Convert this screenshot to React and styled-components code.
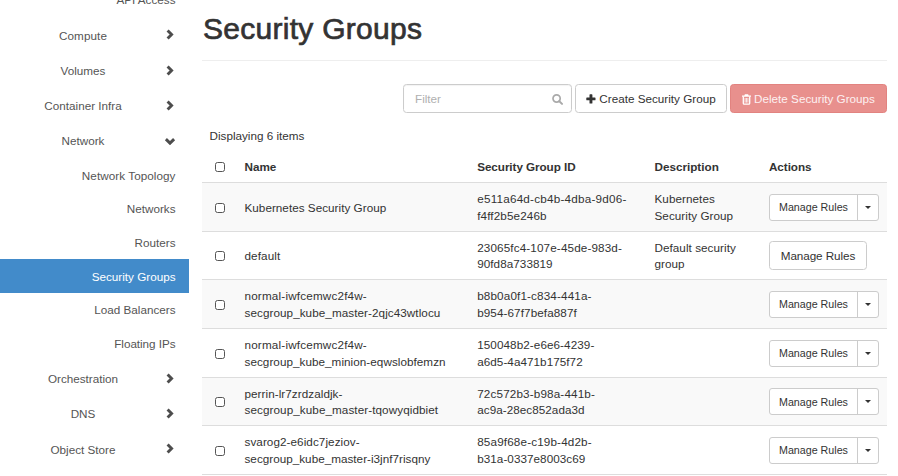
import React from "react";
import styled, { createGlobalStyle } from "styled-components";

const Global = createGlobalStyle`
  * { box-sizing: border-box; }
  body {
    margin: 0;
    background: #fff;
    overflow: hidden;
    font-family: "Liberation Sans", Arial, sans-serif;
    font-size: 11.7px;
    line-height: 16.7px;
    color: #333;
  }
`;

const Page = styled.div`
  display: flex;
  height: 476px;
  overflow: hidden;
`;

const Sidebar = styled.nav`
  width: 189px;
  flex: none;
  display: flex;
  flex-direction: column;
  justify-content: flex-start;
  color: #555;
  margin-top: -17.4px;
`;

const SubItem = styled.a`
  flex: none;
  height: 33.67px;
  padding: 2.6px 13.5px 0 0;
  display: flex;
  align-items: center;
  justify-content: flex-end;
  letter-spacing: ${(p) => p.$track || 0}px;
  color: ${(p) => (p.$active ? "#fff" : "#555")};
  background: ${(p) => (p.$active ? "#428bca" : "transparent")};
`;

const GroupItem = styled.a`
  flex: none;
  height: 35.2px;
  padding-top: 2.4px;
  display: grid;
  grid-template-columns: 166px 7px;
  align-items: center;

  ${SubItem} + & {
    margin-top: 0.9px;
  }
`;

const GroupLabel = styled.span`
  text-align: center;
  letter-spacing: ${(p) => p.$track || 0}px;
`;

const ChevronSvg = styled.svg`
  display: block;
  justify-self: center;
  margin-top: ${(p) => (p.$open ? "-0.5px" : "-2px")};
  transform: ${(p) => (p.$open ? "rotate(90deg)" : "none")};
`;

const Main = styled.main`
  width: 685px;
  margin-left: 13px;
  flex: none;
`;

const Title = styled.h1`
  margin: 0;
  height: 61px;
  padding: 12px 0 0 1px;
  border-bottom: 1px solid #eee;
  font-size: 30px;
  line-height: 34px;
  font-weight: 400;
  letter-spacing: 0.28px;
  -webkit-text-stroke: 0.7px #333;
`;

const Toolbar = styled.div`
  display: flex;
  justify-content: flex-end;
  gap: 3px;
  margin-top: 23px;
`;

const FilterBox = styled.div`
  width: 169px;
  height: 29px;
  padding: 1px 8.5px 0 11px;
  display: flex;
  align-items: center;
  justify-content: space-between;
  border: 1px solid #ccc;
  border-radius: 3.5px;
  box-shadow: inset 0 1px 1px rgba(0, 0, 0, 0.05);
  color: #b0b0b0;
`;

const ToolButton = styled.button`
  width: ${(p) => p.$width}px;
  height: 29px;
  padding: 1px 0 0;
  display: flex;
  align-items: center;
  justify-content: center;
  gap: 3px;
  font: inherit;
  border-radius: 3.5px;
  border: 1px solid ${(p) => (p.$danger ? "#e28380" : "#ccc")};
  background: ${(p) => (p.$danger ? "#e8908d" : "#fff")};
  color: ${(p) => (p.$danger ? "#fdf1f1" : "#333")};
`;

const Count = styled.div`
  height: 38px;
  padding: 15px 0 0 7.5px;
`;

const Row = styled.div`
  display: grid;
  grid-template-columns: 42.5px 232.7px 177.3px 114.5px 1fr;
  align-items: center;
  height: 48.67px;
  border-top: 1px solid #ddd;
  background: ${(p) => (p.$striped ? "#f9f9f9" : "#fff")};
`;

const Foot = styled.div`
  border-top: 1px solid #ddd;
`;

const Cell = styled.div`
  padding-top: ${(p) => (p.$single ? 2.5 : 2)}px;
`;

const Line = styled.div`
  white-space: nowrap;
  letter-spacing: ${(p) => p.$track || 0}px;
`;

const Check = styled.span`
  display: block;
  width: 10px;
  height: 10px;
  margin: 1.8px 0 0 13px;
  border: 1px solid #555;
  border-radius: 2.5px;
  background: #fff;
`;

const HeadRow = styled(Row)`
  height: 31px;
  border-top: 0;
  font-weight: 700;

  ${Line} {
    padding-top: 2px;
  }

  ${Check} {
    margin-top: 1px;
  }
`;

const SplitButton = styled.div`
  display: grid;
  grid-template-columns: 87px 1fr;
  width: 110px;
  height: 27px;
  margin-top: 1px;
  border: 1px solid #ccc;
  border-radius: 3px;
  background: #fff;
  font-size: 10.7px;
`;

const SplitPart = styled.div`
  display: flex;
  align-items: center;
  justify-content: center;
  border-left: ${(p) => (p.$caret ? "1px solid #ccc" : "0")};
`;

const Caret = styled.span`
  border: 3.5px solid transparent;
  border-top-color: #333;
  border-bottom: 0;
`;

const SingleButton = styled.div`
  width: 98px;
  height: 29px;
  margin-top: 1px;
  padding-top: 1px;
  display: flex;
  align-items: center;
  justify-content: center;
  border: 1px solid #ccc;
  border-radius: 3.5px;
  background: #fff;
  letter-spacing: -0.08px;
`;

const Chevron = ({ open }) => (
  <ChevronSvg $open={open} width="8" height="11" viewBox="0 0 8 11">
    <path d="M1.6 1.4 5.6 5.5 1.6 9.6" fill="none" stroke="#4d4d4d" strokeWidth="2.9" />
  </ChevronSvg>
);

const SearchIcon = () => (
  <svg width="11" height="11" viewBox="0 0 11 11" fill="none" stroke="#aaa">
    <circle cx="4.6" cy="4.5" r="3.6" strokeWidth="1.7" />
    <path d="M7.3 7.2 10 9.9" strokeWidth="2" strokeLinecap="round" />
  </svg>
);

const PlusIcon = () => (
  <svg width="10" height="10" viewBox="0 0 10 10" fill="#333">
    <rect x="0.3" y="3.4" width="9.2" height="2.9" rx="0.6" />
    <rect x="3.5" y="0.3" width="2.9" height="9.2" rx="0.6" />
  </svg>
);

const TrashIcon = () => (
  <svg width="9" height="11" viewBox="0 0 9 11" fill="none" stroke="#fff">
    <path d="M0 2.2h9M2.8 2 3.3.8h2.4l.5 1.2" strokeWidth="1.2" />
    <path d="M1.3 2.6v6.6q0 .9.8.9h4.8q.8 0 .8-.9V2.6" strokeWidth="1.3" />
    <path d="M3.1 4v4.6M4.5 4v4.6M5.9 4v4.6" strokeWidth=".8" />
  </svg>
);

const nav = [
  { sub: "API Access" },
  { group: "Compute", track: 0.1 },
  { group: "Volumes" },
  { group: "Container Infra" },
  { group: "Network", open: true },
  { sub: "Network Topology", track: 0.06 },
  { sub: "Networks" },
  { sub: "Routers" },
  { sub: "Security Groups", active: true },
  { sub: "Load Balancers" },
  { sub: "Floating IPs", track: -0.04 },
  { group: "Orchestration" },
  { group: "DNS" },
  { group: "Object Store" },
];

const rows = [
  {
    name: [["Kubernetes Security Group", 0.03]],
    id: [["e511a64d-cb4b-4dba-9d06-", 0.22], ["f4ff2b5e246b", 0.12]],
    description: [["Kubernetes", 0.06], ["Security Group", 0.05]],
    menu: true,
  },
  {
    name: [["default", 0.1]],
    id: [["23065fc4-107e-45de-983d-", 0.13], ["90fd8a733819", 0.06]],
    description: [["Default security", 0.05], ["group", 0.05]],
  },
  {
    name: [["normal-iwfcemwc2f4w-", 0.18], ["secgroup_kube_master-2qjc43wtlocu", 0.07]],
    id: [["b8b0a0f1-c834-441a-", 0.14], ["b954-67f7befa887f", 0.09]],
    menu: true,
  },
  {
    name: [["normal-iwfcemwc2f4w-", 0.18], ["secgroup_kube_minion-eqwslobfemzn", 0.05]],
    id: [["150048b2-e6e6-4239-", 0.08], ["a6d5-4a471b175f72", 0.05]],
    menu: true,
  },
  {
    name: [["perrin-lr7zrdzaldjk-", 0.06], ["secgroup_kube_master-tqowyqidbiet", 0.08]],
    id: [["72c572b3-b98a-441b-", 0.15], ["ac9a-28ec852ada3d", 0.05]],
    menu: true,
  },
  {
    name: [["svarog2-e6idc7jeziov-", 0.07], ["secgroup_kube_master-i3jnf7risqny", 0.02]],
    id: [["85a9f68e-c19b-4d2b-", 0.15], ["b31a-0337e8003c69", 0.05]],
    menu: true,
  },
];

const TextCell = ({ lines = [] }) => (
  <Cell $single={lines.length === 1}>
    {lines.map(([text, track]) => (
      <Line key={text} $track={track}>{text}</Line>
    ))}
  </Cell>
);

export default function App() {
  return (
    <>
      <Global />
      <Page>
        <Sidebar>
          {nav.map((item) =>
            item.sub ? (
              <SubItem key={item.sub} $active={item.active} $track={item.track}>
                {item.sub}
              </SubItem>
            ) : (
              <GroupItem key={item.group}>
                <GroupLabel $track={item.track}>{item.group}</GroupLabel>
                <Chevron open={item.open} />
              </GroupItem>
            )
          )}
        </Sidebar>
        <Main>
          <Title>Security Groups</Title>
          <Toolbar>
            <FilterBox>
              Filter
              <SearchIcon />
            </FilterBox>
            <ToolButton $width={152}>
              <PlusIcon />
              Create Security Group
            </ToolButton>
            <ToolButton $width={157} $danger>
              <TrashIcon />
              Delete Security Groups
            </ToolButton>
          </Toolbar>
          <Count>Displaying 6 items</Count>
          <HeadRow>
            <Check />
            <Line>Name</Line>
            <Line $track={-0.06}>Security Group ID</Line>
            <Line>Description</Line>
            <Line $track={-0.05}>Actions</Line>
          </HeadRow>
          {rows.map((row, i) => (
            <Row key={i} $striped={i % 2 === 0}>
              <Check />
              <TextCell lines={row.name} />
              <TextCell lines={row.id} />
              <TextCell lines={row.description} />
              {row.menu ? (
                <SplitButton>
                  <SplitPart>Manage Rules</SplitPart>
                  <SplitPart $caret>
                    <Caret />
                  </SplitPart>
                </SplitButton>
              ) : (
                <SingleButton>Manage Rules</SingleButton>
              )}
            </Row>
          ))}
          <Foot />
        </Main>
      </Page>
    </>
  );
}
